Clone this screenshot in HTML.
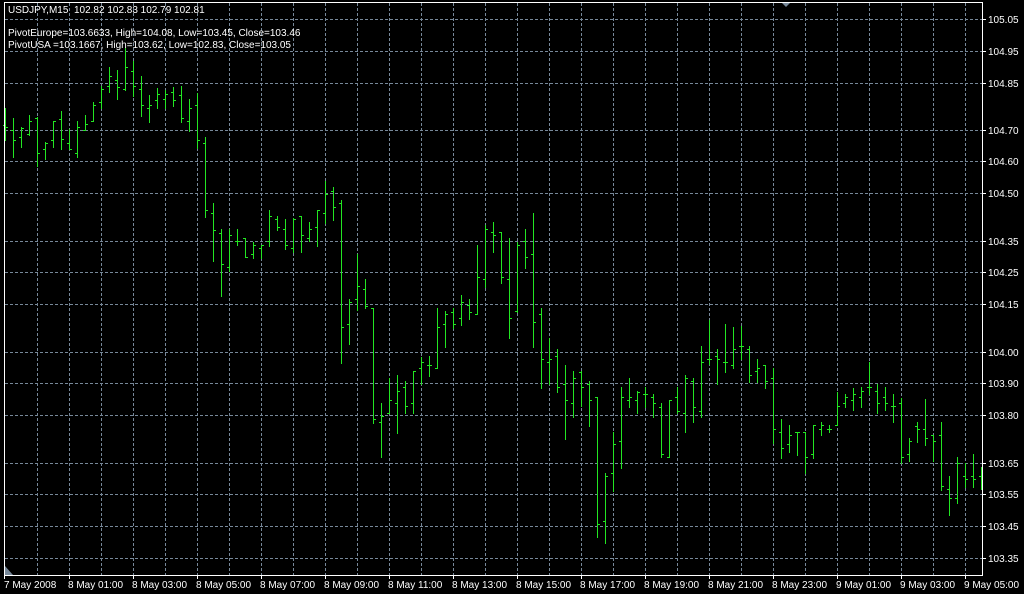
<!DOCTYPE html>
<html><head><meta charset="utf-8"><style>
html,body{margin:0;padding:0;background:#000;width:1024px;height:594px;overflow:hidden}
svg{display:block}
text{font-family:"Liberation Sans",sans-serif;font-size:10px;fill:#fff}
</style></head><body>
<svg width="1024" height="594" viewBox="0 0 1024 594" xmlns="http://www.w3.org/2000/svg">
<rect width="1024" height="594" fill="#000"/>
<g stroke="#778899" stroke-width="1" stroke-dasharray="3,2" fill="none">
<path d="M37.5 3V575M69.5 3V575M101.5 3V575M133.5 3V575M165.5 3V575M197.5 3V575M229.5 3V575M261.5 3V575M293.5 3V575M325.5 3V575M357.5 3V575M389.5 3V575M421.5 3V575M453.5 3V575M485.5 3V575M517.5 3V575M549.5 3V575M581.5 3V575M613.5 3V575M645.5 3V575M677.5 3V575M709.5 3V575M741.5 3V575M773.5 3V575M805.5 3V575M837.5 3V575M869.5 3V575M901.5 3V575M933.5 3V575M965.5 3V575"/>
<path d="M5 19.5H982M5 51.5H982M5 83.5H982M5 130.5H982M5 161.5H982M5 193.5H982M5 241.5H982M5 272.5H982M5 304.5H982M5 352.5H982M5 383.5H982M5 415.5H982M5 463.5H982M5 494.5H982M5 526.5H982M5 558.5H982"/>
</g>
<path fill="none" stroke="#22e622" stroke-width="1" d="
M5.5 108V141M3 125.5h2M6 127.5h2
M13.5 118V158M11 130.5h2M14 140.5h2
M21.5 127V148M19 137.5h2M22 128.5h2
M29.5 115V136M27 134.5h2M30 121.5h2
M37.5 117V167M35 118.5h2M38 153.5h2
M45.5 142V160M43 149.5h2M46 143.5h2
M53.5 121V148M51 140.5h2M54 121.5h2
M61.5 111V150M59 119.5h2M62 139.5h2
M69.5 129V150M67 143.5h2M70 149.5h2
M77.5 121V158M75 153.5h2M78 127.5h2
M85.5 115V131M83 130.5h2M86 124.5h2
M93.5 102V122M91 121.5h2M94 105.5h2
M101.5 86V109M99 102.5h2M102 89.5h2
M109.5 67V93M107 86.5h2M110 76.5h2
M117.5 70V100M115 80.5h2M118 87.5h2
M125.5 48V91M123 89.5h2M126 67.5h2
M133.5 61V97M131 71.5h2M134 86.5h2
M141.5 76V117M139 89.5h2M142 105.5h2
M149.5 95V123M147 108.5h2M150 105.5h2
M157.5 88V109M155 100.5h2M158 94.5h2
M165.5 90V109M163 99.5h2M166 94.5h2
M173.5 87V107M171 92.5h2M174 100.5h2
M181.5 86V123M179 95.5h2M182 118.5h2
M189.5 99V132M187 121.5h2M190 108.5h2
M197.5 93V149M195 105.5h2M198 140.5h2
M205.5 137V218M203 143.5h2M206 210.5h2
M213.5 203V262M211 213.5h2M214 230.5h2
M221.5 229V297M219 233.5h2M222 264.5h2
M229.5 229V272M227 267.5h2M230 235.5h2
M237.5 229V246M235 241.5h2M238 241.5h2
M245.5 238V258M243 238.5h2M246 257.5h2
M253.5 242V259M251 254.5h2M254 245.5h2
M261.5 245V259M259 248.5h2M262 245.5h2
M269.5 210V247M267 241.5h2M270 216.5h2
M277.5 216V231M275 219.5h2M278 227.5h2
M285.5 219V250M283 229.5h2M286 245.5h2
M293.5 218V253M291 248.5h2M294 219.5h2
M301.5 216V253M299 216.5h2M302 235.5h2
M309.5 222V242M307 238.5h2M310 229.5h2
M317.5 210V247M315 227.5h2M318 210.5h2
M325.5 181V224M323 213.5h2M326 194.5h2
M333.5 187V221M331 191.5h2M334 207.5h2
M341.5 200V364M339 203.5h2M342 327.5h2
M349.5 299V345M347 324.5h2M350 302.5h2
M357.5 254V311M355 299.5h2M358 286.5h2
M365.5 279V309M363 289.5h2M366 306.5h2
M373.5 308V424M371 308.5h2M374 419.5h2
M381.5 403V458M379 422.5h2M382 416.5h2
M389.5 378V414M387 413.5h2M390 400.5h2
M397.5 375V434M395 403.5h2M398 391.5h2
M405.5 381V414M403 387.5h2M406 406.5h2
M413.5 371V414M411 403.5h2M414 371.5h2
M421.5 357V385M419 368.5h2M422 362.5h2
M429.5 356V377M427 365.5h2M430 365.5h2
M437.5 308V369M435 368.5h2M438 327.5h2
M445.5 311V348M443 324.5h2M446 314.5h2
M453.5 308V329M451 312.5h2M454 324.5h2
M461.5 295V326M459 318.5h2M462 302.5h2
M469.5 299V320M467 305.5h2M470 312.5h2
M477.5 245V315M475 314.5h2M478 277.5h2
M485.5 225V288M483 279.5h2M486 229.5h2
M493.5 222V253M491 232.5h2M494 235.5h2
M501.5 232V284M499 232.5h2M502 277.5h2
M509.5 238V339M507 279.5h2M510 318.5h2
M517.5 242V313M515 311.5h2M518 245.5h2
M525.5 229V269M523 241.5h2M526 257.5h2
M533.5 213V348M531 254.5h2M534 322.5h2
M541.5 308V389M539 314.5h2M542 359.5h2
M549.5 338V385M547 362.5h2M550 359.5h2
M557.5 349V393M555 356.5h2M558 387.5h2
M565.5 365V440M563 384.5h2M566 400.5h2
M573.5 371V418M571 403.5h2M574 378.5h2
M581.5 371V407M579 372.5h2M582 387.5h2
M589.5 381V427M587 384.5h2M590 400.5h2
M597.5 397V538M595 397.5h2M598 524.5h2
M605.5 473V544M603 521.5h2M606 476.5h2
M613.5 432V492M611 473.5h2M614 444.5h2
M621.5 387V469M619 441.5h2M622 397.5h2
M629.5 378V408M627 400.5h2M630 397.5h2
M637.5 391V414M635 400.5h2M638 392.5h2
M645.5 387V408M643 394.5h2M646 394.5h2
M653.5 394V418M651 397.5h2M654 403.5h2
M661.5 403V458M659 407.5h2M662 454.5h2
M669.5 400V458M667 457.5h2M670 400.5h2
M677.5 387V414M675 397.5h2M678 411.5h2
M685.5 375V433M683 413.5h2M686 378.5h2
M693.5 378V423M691 381.5h2M694 407.5h2
M701.5 346V418M699 411.5h2M702 362.5h2
M709.5 320V365M707 359.5h2M710 359.5h2
M717.5 349V385M715 356.5h2M718 359.5h2
M725.5 324V373M723 362.5h2M726 362.5h2
M733.5 327V369M731 365.5h2M734 349.5h2
M741.5 326V360M739 346.5h2M742 346.5h2
M749.5 346V383M747 349.5h2M750 375.5h2
M757.5 359V383M755 371.5h2M758 368.5h2
M765.5 365V389M763 365.5h2M766 381.5h2
M773.5 368V444M771 378.5h2M774 429.5h2
M781.5 419V459M779 432.5h2M782 448.5h2
M789.5 425V453M787 444.5h2M790 435.5h2
M797.5 432V456M795 432.5h2M798 432.5h2
M805.5 432V474M803 432.5h2M806 457.5h2
M813.5 425V459M811 454.5h2M814 425.5h2
M821.5 422V436M819 429.5h2M822 425.5h2
M829.5 425V433M827 429.5h2M830 429.5h2
M837.5 392V426M835 425.5h2M838 406.5h2
M845.5 394V408M843 403.5h2M846 397.5h2
M853.5 388V411M851 400.5h2M854 394.5h2
M861.5 387V408M859 397.5h2M862 391.5h2
M869.5 362V395M867 387.5h2M870 387.5h2
M877.5 384V414M875 391.5h2M878 403.5h2
M885.5 387V411M883 397.5h2M886 403.5h2
M893.5 394V423M891 406.5h2M894 406.5h2
M901.5 398V464M899 403.5h2M902 457.5h2
M909.5 438V462M907 454.5h2M910 441.5h2
M917.5 422V443M915 426.5h2M918 429.5h2
M925.5 399V446M923 429.5h2M926 438.5h2
M933.5 435V462M931 435.5h2M934 441.5h2
M941.5 422V491M939 435.5h2M942 486.5h2
M949.5 476V516M947 489.5h2M950 498.5h2
M957.5 457V504M955 498.5h2M958 463.5h2
M965.5 463V488M963 476.5h2M966 479.5h2
M973.5 454V488M971 476.5h2M974 479.5h2
M981.5 467V490M979 476.5h2"/>
<path fill="#778899" d="M781 2H791L786 7Z"/>
<path fill="#778899" d="M5 566L5 575L13 575Z"/>
<g stroke="#fff" stroke-width="1" fill="none">
<path d="M4.5 2V575.5H982.5V2.5H4"/>
<path d="M983 19.5h3M983 51.5h3M983 83.5h3M983 130.5h3M983 161.5h3M983 193.5h3M983 241.5h3M983 272.5h3M983 304.5h3M983 352.5h3M983 383.5h3M983 415.5h3M983 463.5h3M983 494.5h3M983 526.5h3M983 558.5h3"/>
<path d="M4.5 576v3M69.5 576v3M133.5 576v3M197.5 576v3M261.5 576v3M325.5 576v3M389.5 576v3M453.5 576v3M517.5 576v3M581.5 576v3M645.5 576v3M709.5 576v3M773.5 576v3M837.5 576v3M901.5 576v3M965.5 576v3"/>
</g>
<text x="8" y="13">USDJPY,M15&#160;&#160;102.82 102.83 102.79 102.81</text>
<text x="8" y="36">PivotEurope=103.6633, High=104.08, Low=103.45, Close=103.46</text>
<text x="8" y="48">PivotUSA =103.1667, High=103.62, Low=102.83, Close=103.05</text>
<g>
<text x="988" y="23">105.05</text>
<text x="988" y="55">104.95</text>
<text x="988" y="87">104.85</text>
<text x="988" y="134">104.70</text>
<text x="988" y="165">104.60</text>
<text x="988" y="197">104.50</text>
<text x="988" y="245">104.35</text>
<text x="988" y="276">104.25</text>
<text x="988" y="308">104.15</text>
<text x="988" y="356">104.00</text>
<text x="988" y="387">103.90</text>
<text x="988" y="419">103.80</text>
<text x="988" y="467">103.65</text>
<text x="988" y="498">103.55</text>
<text x="988" y="530">103.45</text>
<text x="988" y="562">103.35</text>
</g>
<g>
<text x="4" y="588">7 May 2008</text>
<text x="68" y="588">8 May 01:00</text>
<text x="132" y="588">8 May 03:00</text>
<text x="196" y="588">8 May 05:00</text>
<text x="260" y="588">8 May 07:00</text>
<text x="324" y="588">8 May 09:00</text>
<text x="388" y="588">8 May 11:00</text>
<text x="452" y="588">8 May 13:00</text>
<text x="516" y="588">8 May 15:00</text>
<text x="580" y="588">8 May 17:00</text>
<text x="644" y="588">8 May 19:00</text>
<text x="708" y="588">8 May 21:00</text>
<text x="772" y="588">8 May 23:00</text>
<text x="836" y="588">9 May 01:00</text>
<text x="900" y="588">9 May 03:00</text>
<text x="964" y="588">9 May 05:00</text>
</g>
</svg>
</body></html>
